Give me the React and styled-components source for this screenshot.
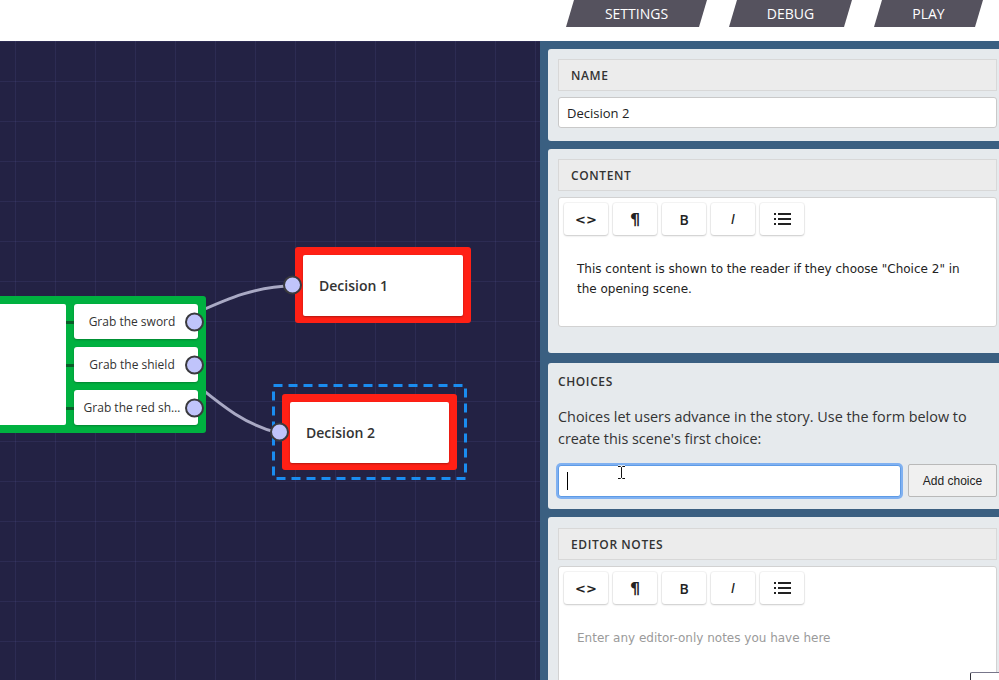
import React from 'react'
import styled, { createGlobalStyle } from 'styled-components'

const GlobalStyle = createGlobalStyle`
  html, body {
    margin: 0;
    padding: 0;
    overflow: hidden;
  }
  body {
    font-family: 'Open Sans', 'DejaVu Sans', sans-serif;
    color: #333;
  }
  * {
    box-sizing: border-box;
  }
`

const Page = styled.div`
  position: relative;
  width: 100vw;
  height: 100vh;
  display: flex;
  flex-direction: column;
  overflow: hidden;
`

const TopBar = styled.header`
  flex: none;
  height: 41px;
  background: #fff;
  display: flex;
  justify-content: flex-end;
  align-items: flex-start;
  gap: 30px;
  padding-right: 20px;
`

const Tab = styled.button`
  position: relative;
  width: ${({ $width }) => $width}px;
  height: 27px;
  padding: 0;
  border: 0;
  background: none;
  font: 14px/27px 'Open Sans', sans-serif;
  color: #fff;
  text-transform: uppercase;
  cursor: pointer;

  &::before {
    content: '';
    position: absolute;
    inset: 0;
    background: #55525e;
    transform: skewX(-16.5deg);
  }

  span {
    position: relative;
  }
`

const Workspace = styled.main`
  flex: 1;
  min-height: 0;
  display: flex;
  background-color: #232244;
  background-image: linear-gradient(to right, rgba(160, 160, 255, 0.08) 1px, transparent 1px),
    linear-gradient(to bottom, rgba(160, 160, 255, 0.08) 1px, transparent 1px);
  background-size: 40px 40px;
  background-position: 15px 0, 0 0;
`

const Canvas = styled.section`
  position: relative;
  flex: none;
  width: 540px;
  overflow: hidden;
`

const Links = styled.svg`
  position: absolute;
  inset: 0;
  width: 100%;
  height: 100%;

  path {
    fill: none;
    stroke: #a9a9c4;
    stroke-width: 3;
  }
`

const ChoiceNode = styled.div`
  position: absolute;
  left: -40px;
  top: 255px;
  width: 246px;
  height: 137px;
  padding: 8px;
  display: flex;
  gap: 8px;
  background: #00b140;
  border-radius: 3px;
`

const NodeBody = styled.div`
  width: 98px;
  background: #fff;
  border-radius: 2px;
`

const ChoiceList = styled.div`
  flex: 1;
  display: flex;
  flex-direction: column;
  gap: 8px;
`

const ChoiceItem = styled.div`
  position: relative;
  height: 35px;
  padding: 0 12px 0 4px;
  display: flex;
  align-items: center;
  justify-content: center;
  background: #fff;
  border-radius: 3px;
  box-shadow: 0 1px 2px rgba(0, 0, 0, 0.25);
  font: 12px 'Open Sans', sans-serif;
  color: #333;
  white-space: nowrap;

  &::before {
    content: '';
    position: absolute;
    left: -8px;
    top: 50%;
    width: 8px;
    height: 3px;
    margin-top: -1px;
    background: #0b5c28;
  }
`

const Port = styled.span`
  position: absolute;
  top: 50%;
  ${({ $side }) => ($side === 'right' ? 'right: -6px;' : 'left: -12px;')}
  width: 19px;
  height: 19px;
  transform: translateY(-50%);
  border-radius: 50%;
  background: #c0c4fb;
  border: 2px solid #3a3a3e;
  z-index: 1;
`

const DecisionNode = styled.div`
  position: absolute;
  left: ${({ $x }) => $x}px;
  top: ${({ $y }) => $y}px;
  width: ${({ $w }) => $w}px;
  height: 76px;
  padding: 8px 8px 7px;
  background: #ff2015;
  border-radius: 3px;
`

const SelectionFrame = styled.svg`
  position: absolute;
  left: -10px;
  top: -10px;
  width: calc(100% + 20px);
  height: calc(100% + 20px);
  overflow: visible;
  pointer-events: none;

  rect {
    fill: none;
    stroke: #1a8cf0;
    stroke-width: 3;
    stroke-dasharray: 9 6;
  }
`

const DecisionCard = styled.div`
  height: 100%;
  display: flex;
  align-items: center;
  padding-left: 16px;
  background: #fff;
  border-radius: 2px;
  box-shadow: 0 1px 2px rgba(0, 0, 0, 0.3);
  font: 600 14px 'Open Sans', sans-serif;
  color: #333;
`

const Sidebar = styled.aside`
  flex: 1;
  min-width: 0;
  overflow: hidden;
  padding: 8px 0 0 8px;
  display: flex;
  flex-direction: column;
  gap: 8px;
  background: rgba(60, 99, 133, 0.94);
`

const Panel = styled.div`
  flex: none;
  width: 459px;
  padding: ${({ $pt }) => $pt || 10}px 10px ${({ $pb }) => $pb}px;
  margin-bottom: ${({ $mb }) => $mb || 0}px;
  display: flex;
  flex-direction: column;
  background: #e6eaed;
  border-radius: 3px;
`

const FieldHeader = styled.div`
  height: 32px;
  margin-bottom: 6px;
  padding-left: 12px;
  display: flex;
  align-items: center;
  background: #ececec;
  border: 1px solid #d8d8d8;
  font: 600 12px 'Open Sans', sans-serif;
  letter-spacing: 0.6px;
  text-transform: uppercase;
  color: #333;
`

const TextInput = styled.input`
  width: 100%;
  height: 31px;
  padding: 0 8px;
  border: 1px solid #c9c9c9;
  border-radius: 3px;
  background: #fff;
  font: 13px 'Open Sans', sans-serif;
  color: #222;
  outline: none;
`

const Editor = styled.div`
  min-height: ${({ $minHeight }) => $minHeight}px;
  padding: 5px;
  background: #fff;
  border: 1px solid #d2d2d2;
  border-radius: 3px;
`

const Toolbar = styled.div`
  display: flex;
  gap: 5px;
`

const ToolButton = styled.button`
  width: 44px;
  height: 32px;
  padding: 0;
  border: 0;
  border-radius: 3px;
  display: flex;
  align-items: center;
  justify-content: center;
  background: #fff;
  box-shadow: 0 1px 2px rgba(0, 0, 0, 0.18), 0 0 0 1px rgba(0, 0, 0, 0.04);
  font: ${({ $italic }) => ($italic ? 'italic 400 14px' : '700 13px')} 'DejaVu Sans', sans-serif;
  color: #222;
`

const Pilcrow = styled.span`
  font: 700 16px 'DejaVu Sans', sans-serif;
`

const BoldGlyph = styled.span`
  font: 600 14px 'Open Sans', sans-serif;
`

const EditorBody = styled.div`
  padding: 24px 30px 8px 13px;
  font: 12px/20px 'DejaVu Sans', sans-serif;
  color: ${({ $placeholder }) => ($placeholder ? '#9a9a9a' : '#222')};
`

const PanelLabel = styled.div`
  margin: 1px 0 16px;
  font: 600 12px/16px 'Open Sans', sans-serif;
  letter-spacing: 0.6px;
  text-transform: uppercase;
  color: #333;
`

const Hint = styled.p`
  margin: 0 0 14px;
  font: 14.4px/22px 'Open Sans', sans-serif;
  color: #333;
`

const ChoiceForm = styled.form`
  display: flex;
  align-items: center;
  gap: 7px;
`

const ChoiceField = styled.div`
  position: relative;
  flex: 1;
`

const ChoiceInput = styled.input`
  width: 100%;
  height: 32px;
  padding: 0 8px;
  border: 1px solid #5e9be6;
  border-radius: 3px;
  box-shadow: 0 0 0 2px #80b1f1;
  background: #fff;
  font: 13px 'Open Sans', sans-serif;
  outline: none;
`

const Caret = styled.span`
  position: absolute;
  left: 9px;
  top: 7px;
  width: 1px;
  height: 18px;
  background: #000;
`

const MouseCursor = styled.svg`
  position: absolute;
  left: 59px;
  top: 0px;
`

const AddButton = styled.button`
  flex: none;
  width: 89px;
  height: 33px;
  padding: 0;
  background: #f0f0f0;
  border: 1px solid #b9b9b9;
  border-radius: 2px;
  font: 12px 'Liberation Sans', Arial, sans-serif;
  color: #222;
`

const CornerPopup = styled.div`
  position: absolute;
  left: 970px;
  top: 672px;
  width: 40px;
  height: 20px;
  background: #fff;
  border: 1px solid #77768a;
  border-left-color: #2f2f3a;
  border-radius: 2px;
`

const ListIcon = () => (
  <svg width="17" height="12" viewBox="0 0 17 12" fill="#222">
    <rect x="0" y="0" width="2" height="2" />
    <rect x="4" y="0" width="13" height="2" />
    <rect x="0" y="5" width="2" height="2" />
    <rect x="4" y="5" width="13" height="2" />
    <rect x="0" y="10" width="2" height="2" />
    <rect x="4" y="10" width="13" height="2" />
  </svg>
)

const RichEditor = ({ minHeight, text, placeholder }) => (
  <Editor $minHeight={minHeight}>
    <Toolbar>
      <ToolButton type="button">&lt;&gt;</ToolButton>
      <ToolButton type="button"><Pilcrow>¶</Pilcrow></ToolButton>
      <ToolButton type="button"><BoldGlyph>B</BoldGlyph></ToolButton>
      <ToolButton type="button" $italic>I</ToolButton>
      <ToolButton type="button"><ListIcon /></ToolButton>
    </Toolbar>
    <EditorBody $placeholder={!text}>{text || placeholder}</EditorBody>
  </Editor>
)

const Decision = ({ x, y, w, selected, children }) => (
  <DecisionNode $x={x} $y={y} $w={w}>
    {selected && (
      <SelectionFrame>
        <rect x="1.5" y="1.5" width={w + 17} height={93} />
      </SelectionFrame>
    )}
    <Port />
    <DecisionCard>{children}</DecisionCard>
  </DecisionNode>
)

const choices = ['Grab the sword', 'Grab the shield', 'Grab the red sh…']

const App = () => {
  return (
    <Page>
      <GlobalStyle />
      <TopBar>
        <Tab $width={133}><span>Settings</span></Tab>
        <Tab $width={115}><span>Debug</span></Tab>
        <Tab $width={101}><span>Play</span></Tab>
      </TopBar>
      <Workspace>
        <Canvas>
          <Links viewBox="0 0 540 639">
            <path d="M196 272 C225 259 255 245 293 245" />
            <path d="M198 345 C220 363 245 384 279 392" />
          </Links>

          <ChoiceNode>
            <NodeBody />
            <ChoiceList>
              {choices.map((c) => (
                <ChoiceItem key={c}>
                  {c}
                  <Port $side="right" />
                </ChoiceItem>
              ))}
            </ChoiceList>
          </ChoiceNode>

          <Decision x={295} y={206} w={176}>Decision 1</Decision>
          <Decision x={282} y={353} w={175} selected>Decision 2</Decision>
        </Canvas>

        <Sidebar>
          <Panel $pb={13}>
            <FieldHeader>Name</FieldHeader>
            <TextInput defaultValue="Decision 2" />
          </Panel>

          <Panel $pb={26} $mb={2}>
            <FieldHeader>Content</FieldHeader>
            <RichEditor
              minHeight={130}
              text={'This content is shown to the reader if they choose "Choice 2" in the opening scene.'}
            />
          </Panel>

          <Panel $pb={12}>
            <PanelLabel>Choices</PanelLabel>
            <Hint>
              Choices let users advance in the story. Use the form below to create this
              scene's first choice:
            </Hint>
            <ChoiceForm onSubmit={(e) => e.preventDefault()}>
              <ChoiceField>
                <ChoiceInput />
                <Caret />
                <MouseCursor width="9" height="15" viewBox="0 0 9 15">
                  <path
                    d="M1 1.5h2.5l1 1 1-1H8M4.5 2.5v10M1 13.5h2.5l1-1 1 1H8"
                    fill="none"
                    stroke="#fff"
                    strokeWidth="2.5"
                  />
                  <path
                    d="M1 1.5h2.5l1 1 1-1H8M4.5 2.5v10M1 13.5h2.5l1-1 1 1H8"
                    fill="none"
                    stroke="#111"
                    strokeWidth="1"
                  />
                </MouseCursor>
              </ChoiceField>
              <AddButton type="submit">Add choice</AddButton>
            </ChoiceForm>
          </Panel>

          <Panel $pt={11} $pb={12}>
            <FieldHeader>Editor notes</FieldHeader>
            <RichEditor minHeight={130} placeholder="Enter any editor-only notes you have here" />
          </Panel>
        </Sidebar>
      </Workspace>
      <CornerPopup />
    </Page>
  )
}

export default App
